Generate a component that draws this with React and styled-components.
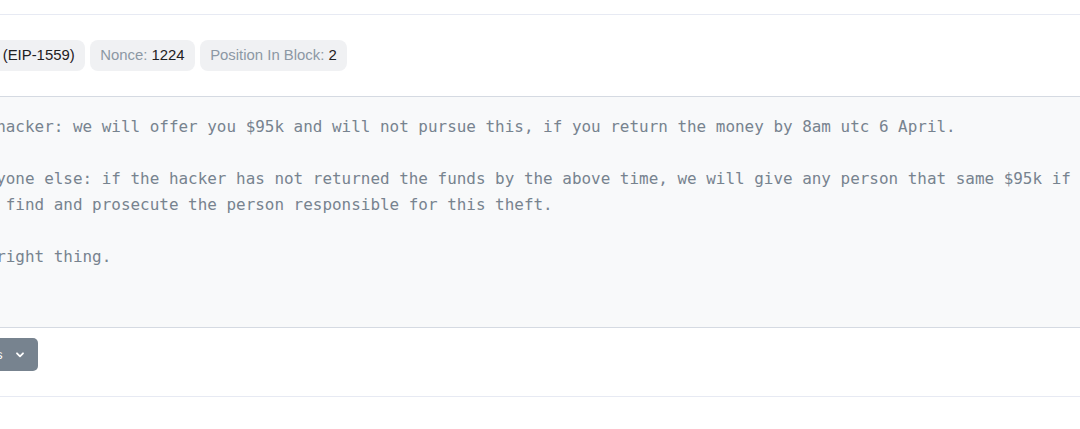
import React from "react";
import styled, { createGlobalStyle } from "styled-components";

const GlobalStyle = createGlobalStyle`
  html, body {
    margin: 0;
    padding: 0;
    background: #ffffff;
    overflow: hidden;
  }
  body {
    font-family: "Liberation Sans", Arial, sans-serif;
  }
`;

const badges = [
  { label: "Txn Type:", value: "2 (EIP-1559)" },
  { label: "Nonce:", value: "1224" },
  { label: "Position In Block:", value: "2" },
];

const inputText = `To the hacker: we will offer you $95k and will not pursue this, if you return the money by 8am utc 6 April.

To everyone else: if the hacker has not returned the funds by the above time, we will give any person that same $95k if they
help us find and prosecute the person responsible for this theft.

Do the right thing.`;

const ChevronDown = () => (
  <svg width="8" height="6" viewBox="0 0 8 6" fill="none">
    <path d="M1 1.3 L4 4.3 L7 1.3" stroke="#ffffff" strokeWidth="1.8" strokeLinecap="round" strokeLinejoin="round" />
  </svg>
);

const App = () => {
  return (
    <>
      <GlobalStyle />
      <Page>
        <Divider />
        <Card>
          <BadgeRow>
            {badges.map((b) => (
              <Badge key={b.label}>
                <BadgeLabel>{b.label}</BadgeLabel> <BadgeValue>{b.value}</BadgeValue>
              </Badge>
            ))}
          </BadgeRow>
          <InputBox>{inputText}</InputBox>
          <Actions>
            <ViewButton>
              View Input As
              <ChevronDown />
            </ViewButton>
          </Actions>
        </Card>
        <Divider />
      </Page>
    </>
  );
};

export default App;

const Page = styled.div`
  width: 1080px;
  padding-top: 14px;
  overflow: hidden;
`;

const Divider = styled.div`
  height: 1px;
  background: #e7eaf3;
`;

const Card = styled.div`
  margin-left: -89px;
  width: 1400px;
`;

const BadgeRow = styled.div`
  display: flex;
  gap: 5.5px;
  padding: 25px 0;
`;

const Badge = styled.span`
  display: inline-block;
  padding: 6px 10px;
  line-height: 19px;
  font-size: 14.9px;
  background: #f0f1f3;
  border-radius: 8px;
  white-space: pre;
`;

const BadgeLabel = styled.span`
  color: #8c98a4;
`;

const BadgeValue = styled.span`
  color: #1e2022;
`;

const InputBox = styled.div`
  box-sizing: border-box;
  height: 232px;
  padding: 17px 18px 0;
  background: #f8f9fa;
  border-top: 1px solid #d5dae2;
  border-bottom: 1px solid #d5dae2;
  font-family: "DejaVu Sans Mono", "Liberation Mono", monospace;
  font-size: 15.95px;
  line-height: 26px;
  color: #77838f;
  white-space: pre;
`;

const Actions = styled.div`
  display: flex;
  padding: 10px 0 25px;
`;

const ViewButton = styled.button`
  display: inline-flex;
  align-items: center;
  gap: 13px;
  height: 33px;
  padding: 0 14px 0 12px;
  border: none;
  border-radius: 5px;
  background: #77838f;
  color: #ffffff;
  font-family: "Liberation Sans", Arial, sans-serif;
  font-size: 13.2px;
`;
